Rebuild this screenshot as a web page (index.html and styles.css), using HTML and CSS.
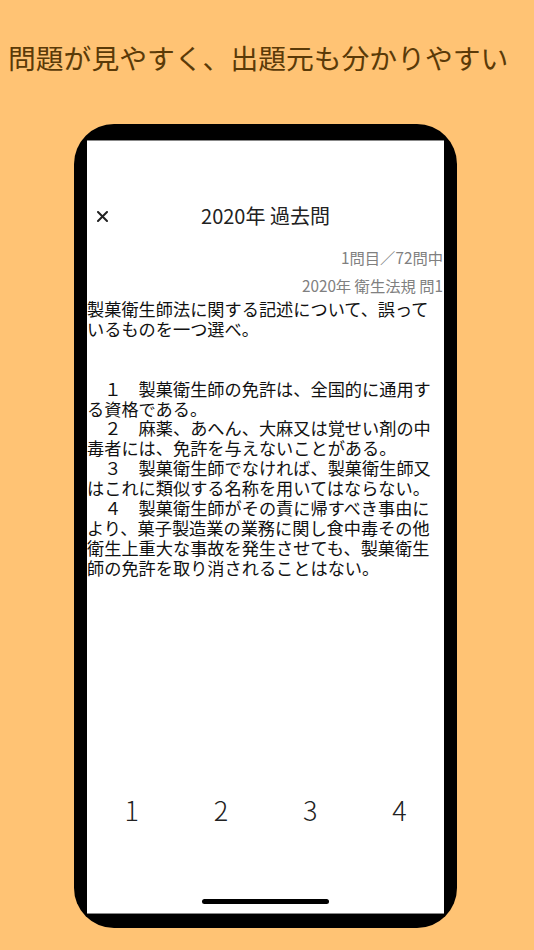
FILE: index.html
```html
<!DOCTYPE html>
<html lang="ja">
<head>
<meta charset="utf-8">
<title>過去問</title>
<link rel="stylesheet" href="styles.css">
</head>
<body>
<div class="page">
  <h1 class="title">問題が見やすく、出題元も分かりやすい</h1>
  <div class="phone">
    <div class="screen">
      <div class="header">
        <svg class="close" width="11" height="11" viewBox="0 0 11 11"><path d="M1 1L10 10M10 1L1 10" stroke="#222" stroke-width="2" stroke-linecap="round"/></svg>
        <div class="header-title">2020年 過去問</div>
      </div>
      <div class="meta">
        <div>1問目／72問中</div>
        <div>2020年 衛生法規 問1</div>
      </div>
      <div class="body">製菓衛生師法に関する記述について、誤っているものを一つ選べ。<br><br><br>　１　製菓衛生師の免許は、全国的に通用する資格である。<br>　２　麻薬、あへん、大麻又は覚せい剤の中毒者には、免許を与えないことがある。<br>　３　製菓衛生師でなければ、製菓衛生師又はこれに類似する名称を用いてはならない。<br>　４　製菓衛生師がその責に帰すべき事由により、菓子製造業の業務に関し食中毒その他衛生上重大な事故を発生させても、製菓衛生師の免許を取り消されることはない。</div>
      <div class="answers">
        <div class="answer">1</div>
        <div class="answer">2</div>
        <div class="answer">3</div>
        <div class="answer">4</div>
      </div>
      <div class="home"><div class="home-bar"></div></div>
    </div>
  </div>
</div>
</body>
</html>
```

FILE: styles.css
```css
html, body {
  margin: 0;
  padding: 0;
}
body {
  background: #ffc374;
  font-family: "Noto Sans CJK JP", "Noto Sans", sans-serif;
}
.page {
  width: 534px;
  height: 950px;
  overflow: hidden;
}
.title {
  margin: 0;
  height: 124px;
  box-sizing: border-box;
  padding: 38px 0 0 8px;
  font-size: 27.8px;
  line-height: 38px;
  font-weight: 400;
  color: #5a3a08;
  white-space: nowrap;
}
.phone {
  margin-left: 74px;
  width: 383px;
  height: 804px;
  box-sizing: border-box;
  background: #000;
  border-radius: 40px;
  padding: 16px 13px 14px 13px;
}
.screen {
  background: #fff;
  height: 100%;
  box-sizing: border-box;
  border-top: 1px solid #888;
  border-bottom: 1px solid #888;
  display: flex;
  flex-direction: column;
}
.header {
  margin-top: 55px;
  height: 40px;
  display: flex;
  align-items: center;
  justify-content: center;
  position: relative;
}
.close {
  position: absolute;
  left: 10px;
  top: 15px;
}
.header-title {
  font-size: 20px;
  color: #222;
  line-height: 40px;
}
.meta {
  margin-top: 7px;
  text-align: right;
  padding-right: 1px;
  font-size: 15.3px;
  line-height: 28px;
  color: #808080;
}
.body {
  font-size: 17.2px;
  line-height: 19.9px;
  color: #111;
}
.answers {
  margin-top: auto;
  display: grid;
  grid-template-columns: repeat(4, 1fr);
  height: 40px;
  align-items: center;
}
.answer {
  text-align: center;
  font-size: 27px;
  font-weight: 300;
  color: #222;
  line-height: 40px;
}
.home {
  height: 83px;
  display: flex;
  align-items: flex-end;
  justify-content: center;
  padding-bottom: 9px;
  box-sizing: border-box;
}
.home-bar {
  width: 127px;
  height: 5px;
  border-radius: 3px;
  background: #000;
}
```
